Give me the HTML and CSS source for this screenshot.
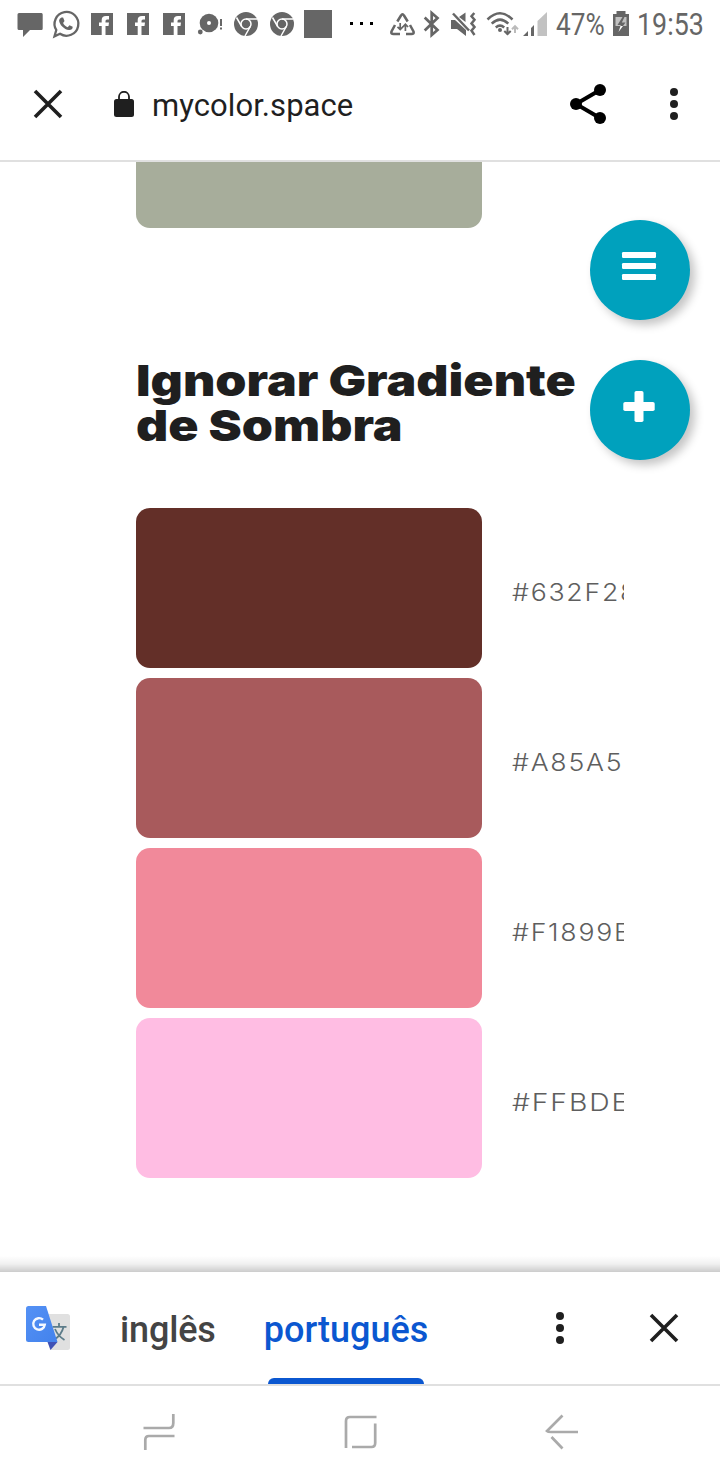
FILE: index.html
```html
<!DOCTYPE html>
<html lang="pt">
<head>
<meta charset="utf-8">
<title>mycolor.space</title>
<link rel="stylesheet" href="styles.css">
</head>
<body>
<div class="screen">
  <header class="status">
    <svg class="notifications" width="390" height="48" viewBox="0 0 390 48" fill="#666">
      <path d="M19 13H41.5Q42.7 13 42.7 14.5V28.5Q42.7 30 41.5 30H30L23 37V30H19Q17.5 30 17.5 28.5V14.5Q17.5 13 19 13Z"/>
      <path d="M54.5 36.3L56.3 30A11.9 11.9 0 1 1 60 33.8Z" fill="none" stroke="#666" stroke-width="2.3"/>
      <path d="M61.5 17.5L63.1 17.6L64.5 21L63.1 23C64.1 25 65.5 26.4 67.7 27.2L69.5 25.2L72.7 26.8C72.9 29 71 30.3 69 30.1C64 29.5 59.3 24.5 59.1 20.5Q59.2 18.3 61.5 17.5Z"/>
      <g id="facebook"><path d="M91 13h22v22H91z"/><path d="M101.7 35V26H99V22.5H101.7V20Q101.7 16 106 16H109V19.5H107Q105.5 19.5 105.5 21V22.5H109L108.5 26H105.5V35Z" fill="#fff"/></g>
      <use href="#facebook" x="36"/>
      <use href="#facebook" x="72"/>
      <circle cx="209" cy="23" r="9.3"/><circle cx="209" cy="23" r="2" fill="#fff"/><circle cx="200.3" cy="32" r="2.4"/>
      <path d="M220 19h2v7h-2zM220 27.5h2v2h-2z"/>
      <g id="chrome"><circle cx="246" cy="24" r="12"/><g fill="none" stroke="#fff" stroke-width="1.5"><circle cx="246" cy="24" r="5"/><path d="M246 19H257M241.7 26.5L236.5 17.5M250.3 26.5L245 36"/></g></g>
      <use href="#chrome" x="36"/>
      <path d="M304 10h28v28h-28z"/>
      <path d="M350 22h3v3h-3zM360 22h3v3h-3zM370 22h3v3h-3z" fill="#000"/>
    </svg>
    <svg width="166" height="48" viewBox="390 0 166 48" fill="none" stroke="#666" stroke-width="2.5">
      <path d="M397.3 21.5L401 15.5Q402.5 12.8 404 15.5L407.7 21.5M395 25L391.5 31.5Q390.7 34 393.5 34H400M410 25L413.5 31.5Q414.3 34 411.5 34H406"/>
      <path d="M400.2 23v6.5M397.5 26.8l2.7 2.7 2.7-2.7M405.4 31v-6.5M402.7 27l2.7-2.7 2.7 2.7" stroke-width="1.7"/>
      <path d="M424.7 17.5L437.5 30L431.7 35V13L437.5 18L424.7 30.5" stroke-width="2.7"/>
      <path d="M451 20H455L466 30V36L457 29H451ZM459 17L465.5 12.5V22Z" fill="#666" stroke="none"/>
      <path d="M453 13.5L469 30.5"/>
      <path d="M474.3 13L471.5 16.2L474.5 19.8L471.5 23.4L474.5 27L471.5 30.6L474.5 35"/>
      <path d="M487.5 19.5Q500 7 512.5 19.5M491.7 23.7Q500 15.5 508.3 23.7M495.8 27.5Q500 23.8 504.2 27.5" stroke-width="2.5"/>
      <circle cx="500" cy="30" r="2" fill="#666" stroke="none"/>
      <path d="M507.5 27v8M504.3 31l3.2 3.2 3.2-3.2" stroke-width="2"/>
      <path d="M515 33v-7M512 29.2l3-3 3 3" stroke="#bbb" stroke-width="2"/>
      <path d="M523 36L528 31V36ZM531 28L534 25V36H531Z" fill="#666" stroke="none"/>
      <path d="M537.5 21L547 12V36H537.5Z" fill="#c2c2c2" stroke="none"/>
    </svg>
    <div class="percent"><span>47%</span></div>
    <svg width="27" height="48" viewBox="608 0 27 48"><path d="M613 14H616.5V11H625.5V14H629V36H613Z" fill="#666"/><path d="M615.5 17H626.5V26H615.5Z" fill="#c2c2c2"/><path d="M622.5 17L617.5 25H620.8L618.5 32L625.5 22.5H621.8L624.5 17Z" fill="#666"/><path d="M618.5 32L620.5 26H623Z" fill="#fff"/></svg>
    <div class="clock"><span>19:53</span></div>
  </header>
  <div class="toolbar">
    <svg class="close" width="30" height="30" viewBox="0 0 30 30"><path d="M2 2L28 28M28 2L2 28"/></svg>
    <svg class="lock" width="20" height="26" viewBox="0 0 20 26"><rect y="8" width="20" height="18" rx="2.5" fill="#1f1f1f"/><path d="M5 9V5.8a5 5 0 0 1 10 0V9" fill="none" stroke="#1f1f1f" stroke-width="1.8"/></svg>
    <span class="url">mycolor.space</span>
    <svg class="share" width="36" height="40" viewBox="0 0 36 40"><path d="M30 6L6 20L30 34" fill="none" stroke="#000" stroke-width="4"/><circle cx="30" cy="6" r="6"/><circle cx="6" cy="20" r="6"/><circle cx="30" cy="34" r="6"/></svg>
    <svg class="more" width="8" height="32" viewBox="0 0 8 32" fill="#1f1f1f"><circle cx="4" cy="4" r="4"/><circle cx="4" cy="16" r="4"/><circle cx="4" cy="28" r="4"/></svg>
  </div>
  <main class="page">
    <div class="swatch previous"></div>
    <h1 class="title"><span class="line first">Ignorar Gradiente</span><span class="line second">de Sombra</span></h1>
    <section class="palette">
      <div class="row"><div class="swatch brown"></div><div class="code"><span>#632F28</span></div></div>
      <div class="row"><div class="swatch red"></div><div class="code"><span>#A85A5C</span></div></div>
      <div class="row"><div class="swatch coral"></div><div class="code"><span>#F1899B</span></div></div>
      <div class="row"><div class="swatch pink"></div><div class="code wide"><span>#FFBDE4</span></div></div>
    </section>
    <div class="actions">
      <button class="fab" aria-label="Menu"><svg width="100" height="100" viewBox="0 0 100 100" fill="#fff"><rect x="32" y="32" width="34" height="6" rx="1.2"/><rect x="32" y="43" width="34" height="6" rx="1.2"/><rect x="32" y="54" width="34" height="6" rx="1.2"/></svg></button>
      <button class="fab" aria-label="Adicionar"><svg width="100" height="100" viewBox="0 0 100 100" fill="#fff"><rect x="33.3" y="42" width="31.4" height="9" rx="1.8"/><rect x="44.5" y="31" width="9" height="31" rx="1.8"/></svg></button>
    </div>
    <div class="shade"></div>
  </main>
  <div class="translate">
    <svg class="logo" width="44" height="44" viewBox="0 0 44 44">
      <defs><linearGradient id="blue" x2="1" y2="1"><stop stop-color="#5491f5"/><stop offset="1" stop-color="#4382ec"/></linearGradient></defs>
      <path d="M16 8H41.5Q44 8 44 10.5V41.5Q44 44 41.5 44H24Z" fill="#e0e0e0"/>
      <path d="M26.5 20.8H40.5M33 17V21M37.5 21Q35.5 29 28.5 33.5M29 23Q32 30 38.5 34" fill="none" stroke="#5c7c89" stroke-width="1.8"/>
      <path d="M21.5 36H31.5L24.5 44Z" fill="#3f51b5"/>
      <path d="M2.5 0H20L31.5 36H2.5Q0 36 0 33.5V2.5Q0 0 2.5 0Z" fill="url(#blue)"/>
      <path d="M17 13.7A5.8 5.8 0 1 0 18.8 18.7H13" fill="none" stroke="#f4f8ff" stroke-width="2.4"/>
    </svg>
    <span class="language source">inglês</span>
    <div class="tab"><span class="language target">português</span><i class="indicator"></i></div>
    <svg class="options" width="8" height="32" viewBox="0 0 8 32" fill="#1f1f1f"><circle cx="4" cy="4" r="4"/><circle cx="4" cy="16" r="4"/><circle cx="4" cy="28" r="4"/></svg>
    <svg class="close" width="30" height="30" viewBox="0 0 30 30"><path d="M2 2L28 28M28 2L2 28"/></svg>
  </div>
  <nav class="navigation">
    <svg width="34" height="38" viewBox="142 1413 34 38"><path d="M173.3 1414V1423Q173.3 1428 169 1428H143.5M174.5 1436H149Q145.3 1436 145.3 1440V1450"/></svg>
    <svg width="34" height="38" viewBox="343.5 1413 34 38"><path d="M345.5 1448V1421Q345.5 1417 349.5 1417H376M374.7 1423.5V1443Q374.7 1447 371 1447H351.5"/></svg>
    <svg width="34" height="38" viewBox="545 1413 34 38"><path d="M562.5 1415.5L547 1431Q548 1432 551 1432H578M551.5 1437L562.5 1448.5"/></svg>
  </nav>
</div>
</body>
</html>
```
FILE: styles.css
```css
* { box-sizing: border-box; }
body { margin: 0; background: #fff; font-family: Roboto, sans-serif; }
svg { display: block; flex: none; }
.screen { width: 720px; height: 1480px; overflow: hidden; background: #fff; display: flex; flex-direction: column; }

.status { height: 48px; display: flex; }
.percent, .clock { height: 48px; line-height: 49px; font-size: 31px; color: #666; white-space: nowrap; }
.percent { width: 52px; }
.percent span, .clock span { display: inline-block; transform-origin: left; }
.percent span { transform: scaleX(.845); }
.clock { width: 85px; padding-left: 2px; }
.clock span { transform: scaleX(.865); }

.toolbar { height: 114px; padding: 0 42px 0 33px; border-bottom: 2px solid #e0e0e0; display: flex; align-items: center; }
.close path { fill: none; stroke: #1f1f1f; stroke-width: 3.6; }
.lock { margin-left: 51px; }
.url { margin-left: 18px; padding-top: 4px; font-size: 31px; line-height: 40px; letter-spacing: .06px; color: #1f1f1f; }
.share { margin-left: auto; }
.more { margin-left: 64px; }

.page { position: relative; height: 1110px; padding-left: 136px; }
.swatch { width: 346px; height: 160px; border-radius: 14px; flex: none; }
.previous { height: 66px; border-radius: 0 0 14px 14px; background: #a7ad9b; }
.title { margin: 130px 0 0; height: 150px; font: 900 43px/45px Inter, sans-serif; color: #1f1f1f; white-space: nowrap; }
.line { display: block; width: max-content; transform-origin: left; transform: scaleX(1.162); }
.palette { display: flex; flex-direction: column; gap: 10px; }
.row { display: flex; align-items: center; gap: 30px; width: 488px; }
.brown { background: #632f28; }
.red { background: #a85a5c; }
.coral { background: #f1899a; }
.pink { background: #ffbde3; }
.code { width: 112px; overflow: hidden; font: 300 24px/40px Inter, sans-serif; letter-spacing: 1.6px; color: #5e5e5e; white-space: nowrap; padding-top: 9px; }
.code span { display: inline-block; transform-origin: left; transform: scaleX(1.11); }
.code.wide span { transform: scaleX(1.18); }
.actions { position: absolute; right: 30px; top: 58px; display: grid; gap: 40px; }
.fab { width: 100px; height: 100px; padding: 0; border: 0; border-radius: 50%; background: #00a1bd; box-shadow: 5px 5px 10px rgba(0,0,0,.23); }
.shade { position: absolute; left: 0; right: 0; bottom: 0; height: 16px; background: linear-gradient(rgba(0,0,0,0), rgba(0,0,0,.06) 50%, rgba(0,0,0,.2)); }

.translate { height: 114px; padding: 0 41px 0 26px; border-bottom: 2px solid #e0e0e0; display: flex; align-items: center; }
.source { width: 94px; margin-left: 50px; color: #444; letter-spacing: -.15px; }
.language { font-size: 36px; font-weight: 500; line-height: 44px; white-space: nowrap; padding-top: 4px; }
.tab { align-self: stretch; margin-left: 50px; width: 164px; display: flex; flex-direction: column; align-items: center; padding-top: 32px; }
.target { color: #0b57d0; }
.indicator { margin-top: auto; width: 156px; height: 6px; border-radius: 6px 6px 0 0; background: #0b57d0; }
.options { margin-left: auto; }
.translate .close { margin-left: 85px; }

.navigation { height: 94px; padding: 27px 141px 0 142px; display: flex; justify-content: space-between; }
.navigation path { fill: none; stroke: #aaa; stroke-width: 2.7; }
```
